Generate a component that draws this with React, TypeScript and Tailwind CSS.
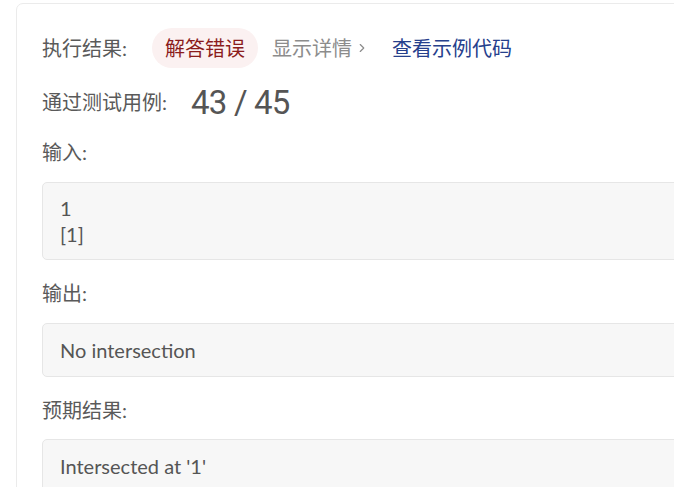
import { ChevronRight } from 'lucide-react';

const font = "font-['Lato','Noto_Sans_CJK_SC',sans-serif]";

const Label = ({ text, className = '' }: { text: string; className?: string }) => (
  <div className={`h-[28px] flex items-center text-[20px] text-[#5a5a5a] ${className}`}>{text}</div>
);

const App = () => {
  return (
    <div className={`w-[674px] h-[487px] overflow-hidden bg-white ${font}`}>
      <div className="ml-[16px] mt-[3px] w-[720px] h-[520px] border border-[#ebebeb] rounded-[7px] pl-[25px] pr-[30px] pt-[24px]">
        {/* result row */}
        <div className="h-[40px] flex items-center text-[20px]">
          <span className="text-[#5a5a5a]">执行结果:</span>
          <span className="ml-[25px] h-[40px] px-[13px] flex items-center rounded-full bg-[#fbf1f1] text-[#8b1c1c]">
            解答错误
          </span>
          <span className="ml-[14px] flex items-center text-[#8c8c8c]">
            显示详情
            <ChevronRight className="ml-[3px] w-[14px] h-[14px]" strokeWidth={2} />
          </span>
          <span className="ml-[23px] text-[#26408c]">查看示例代码</span>
        </div>

        {/* passed cases */}
        <div className="mt-[20px] h-[28px] flex items-center">
          <span className="text-[20px] text-[#5a5a5a]">通过测试用例:</span>
          <span className="ml-[24px] font-['Roboto',sans-serif] font-normal text-[33px] leading-none tracking-[-0.8px] text-[#555555]">
            43 / 45
          </span>
        </div>

        <Label text="输入:" className="mt-[22px]" />
        <div className="mt-[16px] border border-[#e6e6e6] bg-[#f7f7f7] rounded-[5px] px-[17px] py-[12px] text-[20px] leading-[26px] text-[#555555]">
          <div>1</div>
          <div>[1]</div>
        </div>

        <Label text="输出:" className="mt-[19px]" />
        <div className="mt-[16px] border border-[#e6e6e6] bg-[#f7f7f7] rounded-[5px] px-[17px] py-[13px] text-[20px] leading-[26px] text-[#555555]">
          No intersection
        </div>

        <Label text="预期结果:" className="mt-[19px]" />
        <div className="mt-[15px] border border-[#e6e6e6] bg-[#f7f7f7] rounded-[5px] px-[17px] py-[13px] text-[20px] leading-[26px] text-[#555555]">
          Intersected at '1'
        </div>
      </div>
    </div>
  );
};

export default App;
